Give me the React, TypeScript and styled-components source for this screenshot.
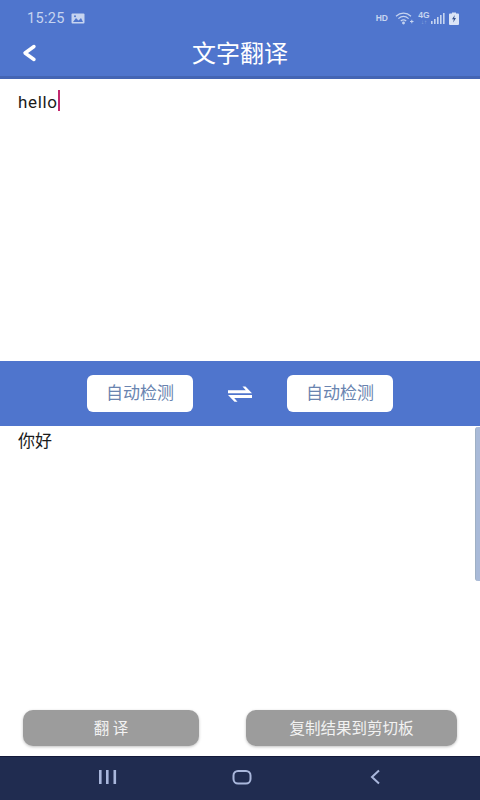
import React from 'react';
import styled, { createGlobalStyle } from 'styled-components';

const GlobalStyle = createGlobalStyle`
  html, body {
    margin: 0;
    padding: 0;
    background: #fff;
  }
  * { box-sizing: border-box; }
`;

const Page = styled.div`
  width: 480px;
  height: 800px;
  display: flex;
  flex-direction: column;
  overflow: hidden;
  font-family: "Noto Sans CJK SC", "Liberation Sans", sans-serif;
`;

const Header = styled.header`
  height: 79px;
  flex: none;
  background: #4f75cd;
  border-bottom: 3px solid #4465b4;
  display: flex;
  flex-direction: column;
`;

const StatusBar = styled.div`
  height: 34px;
  padding: 2px 21px 0 27px;
  display: flex;
  align-items: center;
  color: #c6d4f0;
`;

const Clock = styled.span`
  font-family: Roboto, "Liberation Sans", sans-serif;
  font-size: 14.5px;
  letter-spacing: 0.3px;
  margin-right: 6px;
`;

const StatusRight = styled.div`
  margin-left: auto;
  display: flex;
  align-items: center;
`;

const HdLabel = styled.span`
  font-family: "Liberation Sans", sans-serif;
  font-size: 8.5px;
  font-weight: 700;
  margin-right: 7px;
`;

const NetLabel = styled.span`
  font-family: "Liberation Sans", sans-serif;
  font-size: 8.5px;
  font-weight: 700;
  line-height: 8px;
  width: 12px;
  margin: 0 1px 0 4px;
  display: flex;
  flex-direction: column;
  align-items: center;

  small {
    font-size: 6px;
    line-height: 6px;
    opacity: 0.55;
  }
`;

const TitleRow = styled.div`
  flex: 1;
  position: relative;
  display: flex;
  align-items: center;
  justify-content: center;
  padding-bottom: 7px;
`;

const BackButton = styled.button`
  position: absolute;
  left: 20px;
  top: 9px;
  width: 18px;
  height: 20px;
  padding: 0;
  background: none;
  border: none;
  display: flex;
`;

const Title = styled.h1`
  margin: 0;
  font-size: 24px;
  line-height: 30px;
  font-weight: 400;
  color: #fff;
`;

const InputPane = styled.div`
  height: 282px;
  flex: none;
  padding: 11px 18px;
  background: #fff;
  font-family: Roboto, "Liberation Sans", sans-serif;
  font-size: 17px;
  letter-spacing: 0.65px;
  line-height: 24px;
  color: #1b1b1b;
  display: flex;
  align-items: flex-start;
`;

const Caret = styled.span`
  width: 2px;
  height: 21px;
  background: #c2286e;
`;

const LangBar = styled.div`
  height: 65px;
  flex: none;
  background: #4f75cd;
  display: flex;
  align-items: center;
  justify-content: center;
  gap: 34px;
`;

const LangButton = styled.button`
  width: 106px;
  height: 37px;
  border: none;
  border-radius: 6px;
  background: #fff;
  color: #6a84b0;
  font-family: inherit;
  font-size: 17px;
  line-height: 33px;
  padding: 0 0 4px;
`;

const SwapIcon = styled.svg`
  width: 26px;
  height: 18px;
  display: block;
`;

const OutputPane = styled.div`
  flex: 1;
  position: relative;
  padding: 3px 18px;
  background: #fff;
  font-size: 17px;
  line-height: 22px;
  color: #1b1b1b;
`;

const ScrollThumb = styled.div`
  position: absolute;
  right: 0;
  top: 1px;
  width: 5px;
  height: 154px;
  border-radius: 3px 0 0 3px;
  background: #a9bad8;
  border-left: 1px solid #9fb0c4;
`;

const Actions = styled.div`
  height: 56px;
  flex: none;
  background: #fff;
  padding: 0 23px 10px;
  display: flex;
  align-items: flex-end;
  justify-content: space-between;
`;

const ActionButton = styled.button<{ $width: number }>`
  width: ${props => props.$width}px;
  height: 36px;
  border: none;
  border-radius: 10px;
  background: #9c9c9c;
  color: #f2f2f2;
  font-family: inherit;
  font-size: 15.5px;
  line-height: 32px;
  padding: 0 0 2px;
  box-shadow: 0 1px 3px rgba(0, 0, 0, 0.25);
`;

const NavBar = styled.nav`
  height: 44px;
  flex: none;
  background: #202c50;
  border-top: 1px solid #14193a;
  display: flex;
  align-items: center;
  justify-content: space-between;
  padding: 0 95px 3px 98px;
`;

const NavIcon = styled.svg`
  width: 20px;
  height: 18px;
  display: block;
`;

export default function App() {
  return (
    <Page>
      <GlobalStyle />
      <Header>
        <StatusBar>
          <Clock>15:25</Clock>
          <svg width="14" height="11" viewBox="0 0 14 11">
            <rect x="0.5" y="0.5" width="13" height="10" rx="1" fill="#c6d4f0" />
            <path d="M2 9l3-4 2.5 2.5L10 5l2 4z" fill="#4f75cd" />
            <circle cx="4" cy="3.2" r="1" fill="#4f75cd" />
          </svg>
          <StatusRight>
            <HdLabel>HD</HdLabel>
            <svg width="19" height="13" viewBox="0 0 19 13" fill="none" stroke="#c6d4f0" strokeWidth="1.2">
              <path d="M1 4.2C5.5 0.2 11.5 0.2 16 4.2" />
              <path d="M3.4 6.6C6.5 3.9 10.5 3.9 13.6 6.6" />
              <path d="M5.8 9C7.6 7.5 9.4 7.5 11.2 9" />
              <circle cx="8.5" cy="11" r="0.8" fill="#c6d4f0" />
              <path d="M15 9.5h3.5M16.8 7.8v3.5" strokeWidth="1" />
            </svg>
            <NetLabel>
              4G
              <small>↓↑</small>
            </NetLabel>
            <svg width="14" height="11" viewBox="0 0 14 11" fill="#c6d4f0">
              <rect x="0" y="8" width="1.6" height="3" />
              <rect x="3" y="6" width="1.6" height="5" />
              <rect x="6" y="4" width="1.6" height="7" />
              <rect x="9" y="2" width="1.6" height="9" />
              <rect x="12" y="0" width="1.6" height="11" />
            </svg>
            <svg width="10" height="13" viewBox="0 0 10 13" style={{ marginLeft: 4 }}>
              <path d="M3 0.5h4v1h2a1 1 0 0 1 1 1v9.500a1 1 0 0 1-1 1H1a1 1 0 0 1-1-1V2.500a1 1 0 0 1 1-1h2z" fill="#dbe4f6" />
              <path d="M5.800 3L3 7.300h1.800L4.200 10.500 7 6H5.200z" fill="#36528f" />
            </svg>
          </StatusRight>
        </StatusBar>
        <TitleRow>
          <BackButton aria-label="返回">
            <svg width="18" height="20" viewBox="0 0 18 20" fill="none">
              <path d="M14 3.500L5 10l9 6.500" stroke="#fff" strokeWidth="3.400" strokeLinecap="round" strokeLinejoin="round" />
            </svg>
          </BackButton>
          <Title>文字翻译</Title>
        </TitleRow>
      </Header>

      <InputPane>
        hello
        <Caret />
      </InputPane>

      <LangBar>
        <LangButton>自动检测</LangButton>
        <SwapIcon viewBox="0 0 26 18" fill="#fff">
          <path d="M1 5.200h17.800L15.500 1.500h3L25 8.200H1z" />
          <path d="M25 10H1l6.500 6.800h3L7.200 13H25z" />
        </SwapIcon>
        <LangButton>自动检测</LangButton>
      </LangBar>

      <OutputPane>
        你好
        <ScrollThumb />
      </OutputPane>

      <Actions>
        <ActionButton $width={176}>翻 译</ActionButton>
        <ActionButton $width={211}>复制结果到剪切板</ActionButton>
      </Actions>

      <NavBar>
        <NavIcon viewBox="0 0 20 18" fill="#a9b7dc">
          <rect x="1" y="2" width="2.600" height="14" />
          <rect x="8" y="2" width="2.600" height="14" />
          <rect x="15.500" y="2" width="2.600" height="14" />
        </NavIcon>
        <NavIcon viewBox="0 0 20 18" fill="none" stroke="#a9b7dc" strokeWidth="2">
          <rect x="1.500" y="3" width="17" height="12.500" rx="4.500" />
        </NavIcon>
        <NavIcon viewBox="0 0 20 18" fill="none" stroke="#a9b7dc" strokeWidth="2">
          <path d="M14 2.500L7 9l7 6.500" />
        </NavIcon>
      </NavBar>
    </Page>
  );
}
